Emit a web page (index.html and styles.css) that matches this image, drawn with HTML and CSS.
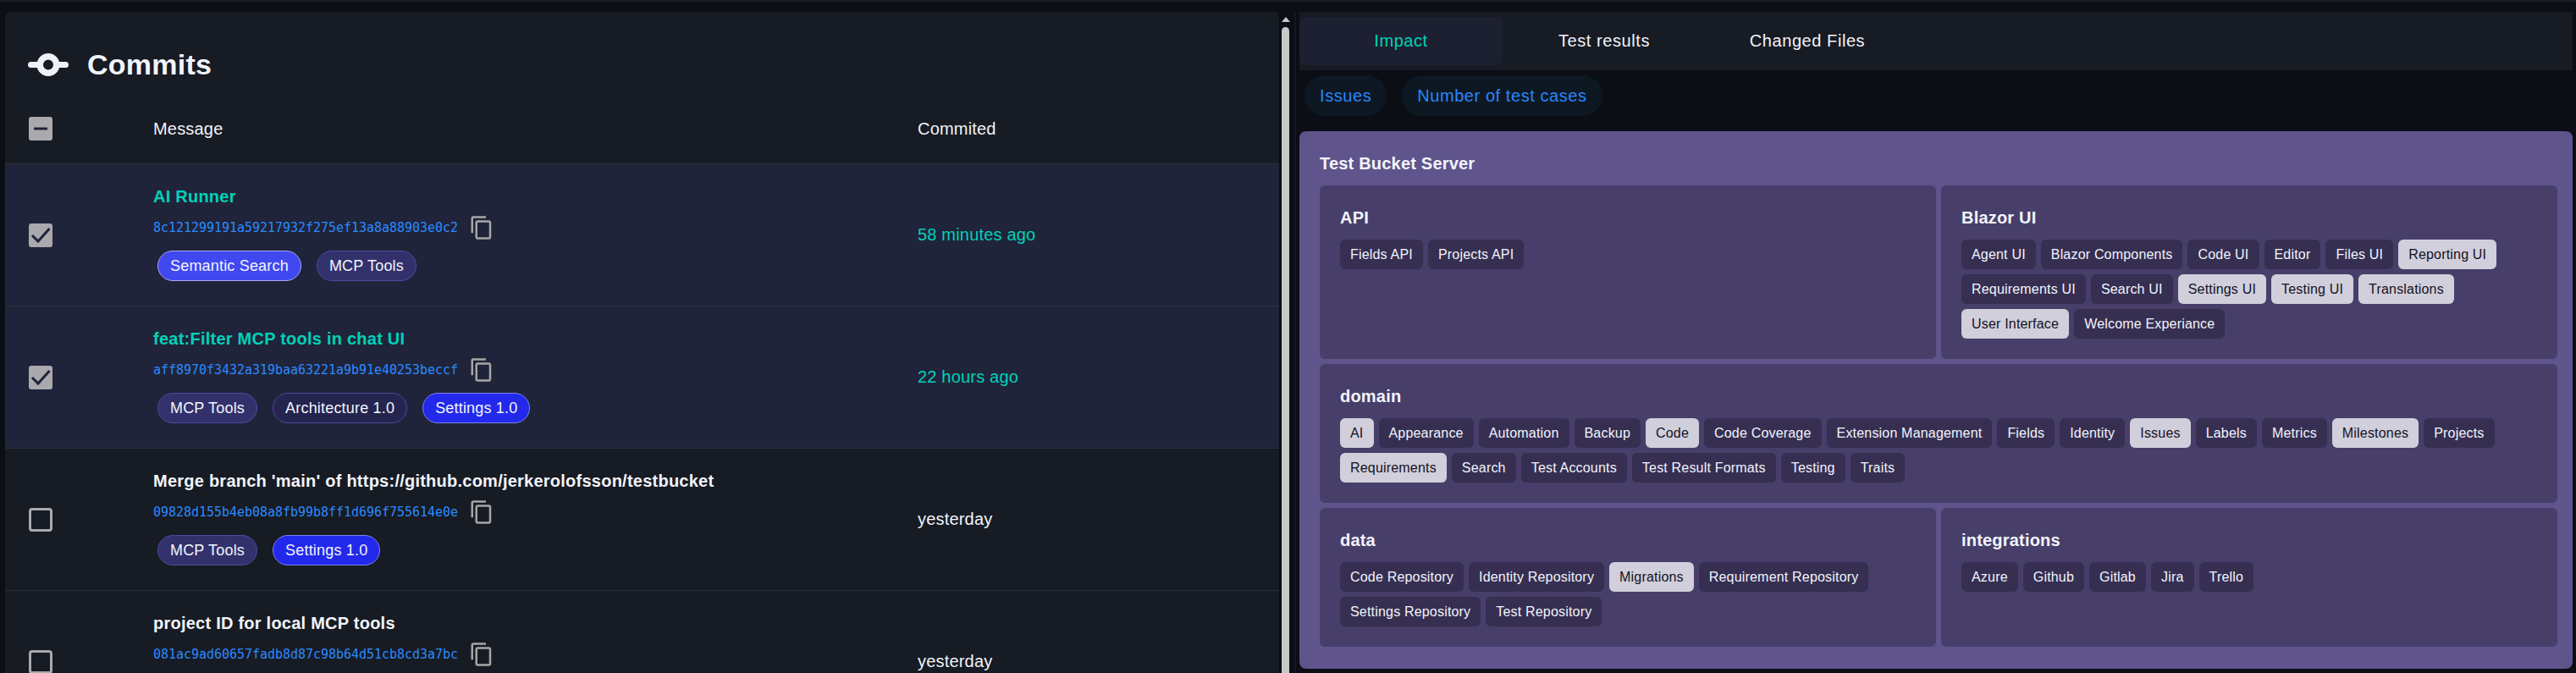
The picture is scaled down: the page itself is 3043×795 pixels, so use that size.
FILE: index.html
```html
<!DOCTYPE html>
<html lang="en">
<head>
    <meta charset="UTF-8">
    <meta name="viewport" content="width=device-width, initial-scale=1.0">
    <title>Commits</title>
    <link rel="stylesheet" href="styles.css">
</head>
<body>
    <div class="topbar"></div>
    <div class="main">
        <section class="commits">
            <h1 class="commits-title">
                <svg class="commit-icon" width="48" height="27" viewBox="0 0 48 27"><line x1="3.5" y1="13.5" x2="44.5" y2="13.5" stroke="#eef1fa" stroke-width="7" stroke-linecap="round"/><circle cx="24" cy="13.5" r="9.75" fill="#171b23" stroke="#eef1fa" stroke-width="7.5"/></svg>
                Commits
            </h1>
            <div class="row head">
                <svg class="check" width="28" height="28" viewBox="0 0 28 28"><rect width="28" height="28" rx="3" fill="#aaa9ad"/><path d="M6 14H22" stroke="#20243a" stroke-width="3"/></svg>
                <div>Message</div>
                <div>Commited</div>
            </div>
            <div class="row selected">
                <svg class="check" width="28" height="28" viewBox="0 0 28 28"><rect width="28" height="28" rx="3" fill="#aaa9ad"/><path d="M4 14L11 21L24.5 6" fill="none" stroke="#20243a" stroke-width="3"/></svg>
                <div class="commit">
                    <div class="msg">AI Runner</div>
                    <div class="meta">
                        <span class="hash">8c121299191a59217932f275ef13a8a88903e0c2</span>
                        <svg class="copy" width="30" height="30" viewBox="0 0 24 24"><path d="M16 1H4c-1.1 0-2 .9-2 2v14h2V3h12V1zm3 4H8c-1.1 0-2 .9-2 2v14c0 1.1.9 2 2 2h11c1.1 0 2-.9 2-2V7c0-1.1-.9-2-2-2zm0 16H8V7h11v14z"/></svg>
                    </div>
                    <div class="chips">
                        <span class="chip semantic">Semantic Search</span>
                        <span class="chip mcp">MCP Tools</span>
                    </div>
                </div>
                <div class="when">58 minutes ago</div>
            </div>
            <div class="row selected">
                <svg class="check" width="28" height="28" viewBox="0 0 28 28"><rect width="28" height="28" rx="3" fill="#aaa9ad"/><path d="M4 14L11 21L24.5 6" fill="none" stroke="#20243a" stroke-width="3"/></svg>
                <div class="commit">
                    <div class="msg">feat:Filter MCP tools in chat UI</div>
                    <div class="meta">
                        <span class="hash">aff8970f3432a319baa63221a9b91e40253beccf</span>
                        <svg class="copy" width="30" height="30" viewBox="0 0 24 24"><path d="M16 1H4c-1.1 0-2 .9-2 2v14h2V3h12V1zm3 4H8c-1.1 0-2 .9-2 2v14c0 1.1.9 2 2 2h11c1.1 0 2-.9 2-2V7c0-1.1-.9-2-2-2zm0 16H8V7h11v14z"/></svg>
                    </div>
                    <div class="chips">
                        <span class="chip mcp">MCP Tools</span>
                        <span class="chip arch">Architecture 1.0</span>
                        <span class="chip settings">Settings 1.0</span>
                    </div>
                </div>
                <div class="when">22 hours ago</div>
            </div>
            <div class="row">
                <svg class="check" width="28" height="28" viewBox="0 0 28 28"><rect x="1.5" y="1.5" width="25" height="25" rx="2.5" fill="none" stroke="#aaa9ad" stroke-width="3"/></svg>
                <div class="commit">
                    <div class="msg">Merge branch 'main' of https://github.com/jerkerolofsson/testbucket</div>
                    <div class="meta">
                        <span class="hash">09828d155b4eb08a8fb99b8ff1d696f755614e0e</span>
                        <svg class="copy" width="30" height="30" viewBox="0 0 24 24"><path d="M16 1H4c-1.1 0-2 .9-2 2v14h2V3h12V1zm3 4H8c-1.1 0-2 .9-2 2v14c0 1.1.9 2 2 2h11c1.1 0 2-.9 2-2V7c0-1.1-.9-2-2-2zm0 16H8V7h11v14z"/></svg>
                    </div>
                    <div class="chips">
                        <span class="chip mcp">MCP Tools</span>
                        <span class="chip settings">Settings 1.0</span>
                    </div>
                </div>
                <div class="when">yesterday</div>
            </div>
            <div class="row">
                <svg class="check" width="28" height="28" viewBox="0 0 28 28"><rect x="1.5" y="1.5" width="25" height="25" rx="2.5" fill="none" stroke="#aaa9ad" stroke-width="3"/></svg>
                <div class="commit">
                    <div class="msg">project ID for local MCP tools</div>
                    <div class="meta">
                        <span class="hash">081ac9ad60657fadb8d87c98b64d51cb8cd3a7bc</span>
                        <svg class="copy" width="30" height="30" viewBox="0 0 24 24"><path d="M16 1H4c-1.1 0-2 .9-2 2v14h2V3h12V1zm3 4H8c-1.1 0-2 .9-2 2v14c0 1.1.9 2 2 2h11c1.1 0 2-.9 2-2V7c0-1.1-.9-2-2-2zm0 16H8V7h11v14z"/></svg>
                    </div>
                </div>
                <div class="when">yesterday</div>
            </div>
        </section>

        <div class="scrollbar">
            <div class="arrow"></div>
            <div class="thumb"></div>
        </div>
        <div class="divider"></div>

        <section class="details">
            <div class="tabs">
                <div class="tab active">Impact</div>
                <div class="tab">Test results</div>
                <div class="tab">Changed Files</div>
            </div>
            <div class="filters">
                <span class="filter">Issues</span>
                <span class="filter">Number of test cases</span>
            </div>
            <div class="system">
                <h2 class="group-title">Test Bucket Server</h2>
                <div class="layers">
                    <div class="layer">
                        <h3 class="group-title">API</h3>
                        <div class="tags">
                            <span class="tag">Fields API</span>
                            <span class="tag">Projects API</span>
                        </div>
                    </div>
                    <div class="layer">
                        <h3 class="group-title">Blazor UI</h3>
                        <div class="tags">
                            <span class="tag">Agent UI</span>
                            <span class="tag">Blazor Components</span>
                            <span class="tag">Code UI</span>
                            <span class="tag">Editor</span>
                            <span class="tag">Files UI</span>
                            <span class="tag on">Reporting UI</span>
                            <span class="tag">Requirements UI</span>
                            <span class="tag">Search UI</span>
                            <span class="tag on">Settings UI</span>
                            <span class="tag on">Testing UI</span>
                            <span class="tag on">Translations</span>
                            <span class="tag on">User Interface</span>
                            <span class="tag">Welcome Experiance</span>
                        </div>
                    </div>
                    <div class="layer wide">
                        <h3 class="group-title">domain</h3>
                        <div class="tags">
                            <span class="tag on">AI</span>
                            <span class="tag">Appearance</span>
                            <span class="tag">Automation</span>
                            <span class="tag">Backup</span>
                            <span class="tag on">Code</span>
                            <span class="tag">Code Coverage</span>
                            <span class="tag">Extension Management</span>
                            <span class="tag">Fields</span>
                            <span class="tag">Identity</span>
                            <span class="tag on">Issues</span>
                            <span class="tag">Labels</span>
                            <span class="tag">Metrics</span>
                            <span class="tag on">Milestones</span>
                            <span class="tag">Projects</span>
                            <span class="tag on">Requirements</span>
                            <span class="tag">Search</span>
                            <span class="tag">Test Accounts</span>
                            <span class="tag">Test Result Formats</span>
                            <span class="tag">Testing</span>
                            <span class="tag">Traits</span>
                        </div>
                    </div>
                    <div class="layer">
                        <h3 class="group-title">data</h3>
                        <div class="tags">
                            <span class="tag">Code Repository</span>
                            <span class="tag">Identity Repository</span>
                            <span class="tag on">Migrations</span>
                            <span class="tag">Requirement Repository</span>
                            <span class="tag">Settings Repository</span>
                            <span class="tag">Test Repository</span>
                        </div>
                    </div>
                    <div class="layer">
                        <h3 class="group-title">integrations</h3>
                        <div class="tags">
                            <span class="tag">Azure</span>
                            <span class="tag">Github</span>
                            <span class="tag">Gitlab</span>
                            <span class="tag">Jira</span>
                            <span class="tag">Trello</span>
                        </div>
                    </div>
                </div>
            </div>
        </section>
    </div>
</body>
</html>
```

FILE: styles.css
```css
* {
    box-sizing: border-box;
}
body {
    font-family: "Liberation Sans", Arial, sans-serif;
    font-size: 20px;
    letter-spacing: .00938em;
    background-color: #0b0e14;
    color: #f2f4fb;
    margin: 0;
    height: 100vh;
    overflow: hidden;
}
.topbar {
    height: 2px;
    background-color: #171b23;
}
.main {
    display: flex;
    height: 793px;
    padding: 12px 4px 0 6px;
}

/* commits list */
.commits {
    width: 1505px;
    flex-shrink: 0;
    background-color: #171b23;
    border-radius: 6px 6px 0 0;
    overflow: hidden;
}
.commits-title {
    display: flex;
    align-items: center;
    gap: 22px;
    height: 124px;
    margin: 0;
    padding-left: 27px;
    font-size: 34px;
    font-weight: 700;
    letter-spacing: .00735em;
}
.row {
    display: grid;
    grid-template-columns: 147px 903px 1fr;
    align-items: center;
    min-height: 168px;
    padding-left: 28px;
    border-bottom: 1px solid #2b2f38;
}
.row.head {
    min-height: 0;
    height: 56px;
    line-height: 28px;
    align-items: start;
}
.row.selected {
    background-color: #20243a;
}
.commit {
    align-self: start;
    padding: 24px 0 29px;
}
.msg {
    height: 28px;
    line-height: 28px;
    font-weight: 700;
    letter-spacing: .012em;
}
.selected .msg,
.selected .when {
    color: #00d2b9;
}
.meta {
    display: flex;
    align-items: center;
    height: 28px;
    margin-top: 9px;
    gap: 13px;
}
.hash {
    font-family: "DejaVu Sans Mono", monospace;
    font-size: 15px;
    letter-spacing: -.03px;
    color: #2a8aff;
}
.copy {
    fill: #a6a6a6;
}
.chips {
    display: flex;
    gap: 18px;
    margin: 13px 0 0 5px;
}
.chip {
    height: 36px;
    line-height: 34px;
    padding: 0 14px;
    border: 1px solid #4b4ba0;
    border-radius: 18px;
    font-size: 18px;
}
.chip.semantic {
    background-color: #4048f0;
    border-color: #a5a8f5;
}
.chip.mcp {
    background-color: #33316b;
}
.chip.arch {
    background-color: #24244e;
}
.chip.settings {
    background-color: #2229ea;
    border-color: #7c82f2;
}

.scrollbar {
    width: 18px;
    flex-shrink: 0;
    padding: 6px 0 0 3px;
}
.arrow {
    width: 0;
    border-left: 5px solid transparent;
    border-right: 5px solid transparent;
    border-bottom: 6px solid #c8c8c8;
}
.thumb {
    width: 9px;
    height: 800px;
    margin-top: 6px;
    background-color: #c8c8c8;
    border-radius: 5px;
}
.divider {
    width: 2px;
    flex-shrink: 0;
    background-color: #141821;
}

/* right side */
.details {
    flex: 1;
    margin-left: 4px;
    min-width: 0;
}
.tabs {
    display: flex;
    height: 69px;
    padding-top: 6px;
    background-color: #171b23;
}
.tab {
    width: 240px;
    height: 57px;
    line-height: 57px;
    text-align: center;
    letter-spacing: .02857em;
    border-radius: 8px;
}
.tab.active {
    background-color: #1d2030;
    color: #00d2b9;
}
.filters {
    display: flex;
    gap: 18px;
    margin: 6px 0 18px 6px;
}
.filter {
    height: 48px;
    line-height: 48px;
    padding: 0 18px;
    border-radius: 24px;
    letter-spacing: .02857em;
    background-color: #0d1823;
    color: #2a86ff;
}
.system {
    height: 635px;
    padding: 24px 18px 24px 24px;
    background-color: #5f548c;
    border-radius: 8px;
}
.group-title {
    margin: 0 0 12px;
    height: 28px;
    line-height: 28px;
    font-size: 20px;
    font-weight: 700;
    letter-spacing: .01em;
}
.layers {
    display: grid;
    grid-template-columns: 1fr 1fr;
    gap: 6px;
}
.layer {
    padding: 24px;
    background-color: #473f69;
    border-radius: 6px;
}
.layer.wide {
    grid-column: 1 / 3;
}
.tags {
    display: flex;
    flex-wrap: wrap;
    gap: 6px;
}
.tag {
    height: 35px;
    line-height: 35px;
    padding: 0 12px;
    font-size: 16px;
    background-color: #362f52;
    border-radius: 6px;
}
.tag.on {
    background-color: #d1cfdb;
    color: #14121f;
}
```
